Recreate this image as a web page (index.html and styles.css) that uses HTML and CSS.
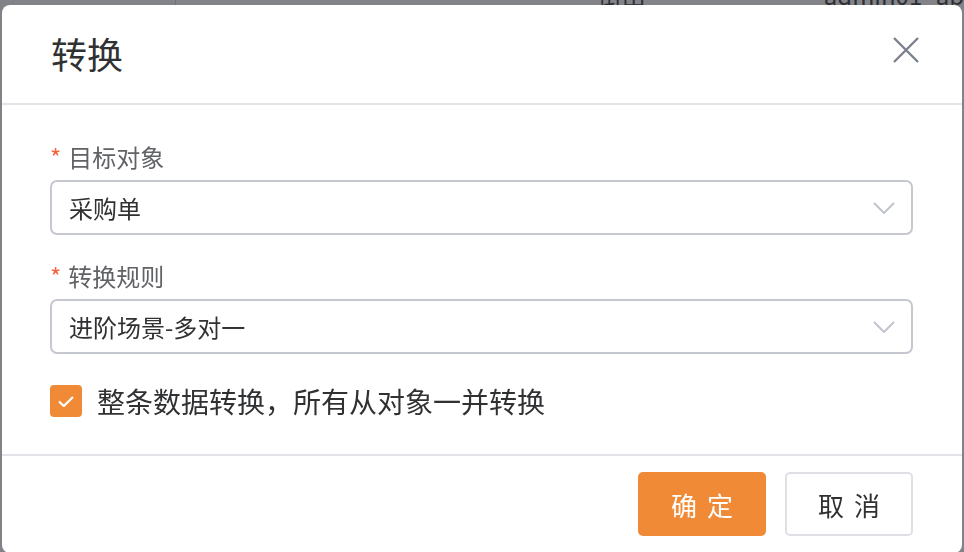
FILE: index.html
```html
<!DOCTYPE html>
<html lang="zh-CN">

<head>
    <meta charset="UTF-8">
    <meta name="viewport" content="width=device-width, initial-scale=1.0">
    <title>转换</title>
    <link rel="stylesheet" href="styles.css">
</head>

<body>
    <!-- page behind the mask -->
    <div class="page">
        <div class="page-head">
            <div class="cell cell-first"></div>
            <div class="cell cell-name">街由</div>
            <div class="cell cell-user">admin01_ab</div>
        </div>
    </div>

    <div class="mask"></div>

    <div class="dialog">
        <div class="dialog-header">
            <span class="dialog-title">转换</span>
            <button class="dialog-close" aria-label="关闭">
                <svg width="26" height="26" viewBox="0 0 26 26">
                    <path d="M1 1 L25 25 M25 1 L1 25" stroke="#7b818d" stroke-width="2.4" fill="none" />
                </svg>
            </button>
        </div>

        <div class="dialog-body">
            <div class="form-item">
                <div class="form-label required">目标对象</div>
                <div class="select">
                    <span class="select-value">采购单</span>
                    <svg class="select-arrow" width="22" height="12" viewBox="0 0 22 12">
                        <polyline points="1,1 11,11 21,1" stroke="#c0c4cc" stroke-width="2" fill="none" />
                    </svg>
                </div>
            </div>

            <div class="form-item">
                <div class="form-label required">转换规则</div>
                <div class="select">
                    <span class="select-value">进阶场景-多对一</span>
                    <svg class="select-arrow" width="22" height="12" viewBox="0 0 22 12">
                        <polyline points="1,1 11,11 21,1" stroke="#c0c4cc" stroke-width="2" fill="none" />
                    </svg>
                </div>
            </div>

            <label class="checkbox">
                <span class="checkbox-box">
                    <svg width="16" height="11" viewBox="0 0 16 11">
                        <polyline points="1,5.5 5.8,10 15,1" stroke="#fff" stroke-width="2.2" fill="none" />
                    </svg>
                </span>
                <span class="checkbox-text">整条数据转换，所有从对象一并转换</span>
            </label>
        </div>

        <div class="dialog-footer">
            <button class="btn btn-primary">确定</button>
            <button class="btn btn-default">取消</button>
        </div>
    </div>
</body>

</html>
```

FILE: styles.css
```css
body {
    margin: 0;
    overflow: hidden;
    background: #818388;
    font-family: "Noto Sans CJK SC", "Noto Sans", sans-serif;
}

.page-head {
    display: flex;
    height: 22px;
    margin-top: -16px;
    font-size: 24px;
    line-height: 22px;
    color: #2e2f33;
}

.cell-first {
    width: 175px;
    border-right: 1px solid #6f7176;
}

.cell-name {
    padding-left: 422px;
    width: 160px;
}

.cell-user {
    padding-left: 66px;
}

.mask {
    position: fixed;
    top: 0;
    left: 0;
    width: 100%;
    height: 100%;
}

.dialog {
    position: fixed;
    top: 5px;
    left: 2px;
    width: 960px;
    height: 548px;
    background: #fff;
    border-radius: 8px;
    display: flex;
    flex-direction: column;
}

.dialog-header {
    height: 98px;
    padding: 0 43px 0 49px;
    display: flex;
    align-items: center;
    justify-content: space-between;
    border-bottom: 2px solid #e3e3e8;
}

.dialog-title {
    font-size: 36px;
    line-height: 40px;
    color: #303133;
    margin-bottom: 3px;
}

.dialog-close {
    padding: 0;
    border: none;
    background: none;
    width: 26px;
    height: 26px;
    margin-bottom: 8px;
    cursor: pointer;
}

.dialog-close svg {
    display: block;
}

.dialog-body {
    padding: 37px 49px 37px 48px;
    border-bottom: 2px solid #e3e3e8;
}

.form-item + .form-item {
    margin-top: 26px;
}

.form-label {
    font-size: 24px;
    line-height: 30px;
    color: #606266;
    margin-bottom: 8px;
}

.required::before {
    content: "*";
    color: #f2643b;
    margin-right: 7px;
}

.select {
    height: 55px;
    box-sizing: border-box;
    border: 2px solid #c6c8d0;
    border-radius: 7px;
    padding: 0 16px 0 17px;
    display: flex;
    align-items: center;
    justify-content: space-between;
}

.select-value {
    font-size: 24px;
    color: #303133;
}

.checkbox {
    display: flex;
    align-items: center;
    gap: 15px;
    height: 32px;
    margin-top: 31px;
}

.checkbox-box {
    width: 32px;
    height: 32px;
    border-radius: 4px;
    background: #f08a36;
    display: flex;
    align-items: center;
    justify-content: center;
}

.checkbox-text {
    font-size: 28px;
    line-height: 32px;
    color: #303133;
}

.dialog-footer {
    display: flex;
    justify-content: flex-end;
    gap: 19px;
    padding: 16px 49px 0;
}

.btn {
    width: 128px;
    height: 64px;
    border-radius: 5px;
    font-family: inherit;
    font-size: 26px;
    letter-spacing: 10px;
    padding: 0 0 0 10px;
    cursor: pointer;
}

.btn-primary {
    background: #f08a36;
    border: none;
    color: #fff;
}

.btn-default {
    background: #fff;
    border: 2px solid #dfe0e6;
    color: #303133;
}
```
